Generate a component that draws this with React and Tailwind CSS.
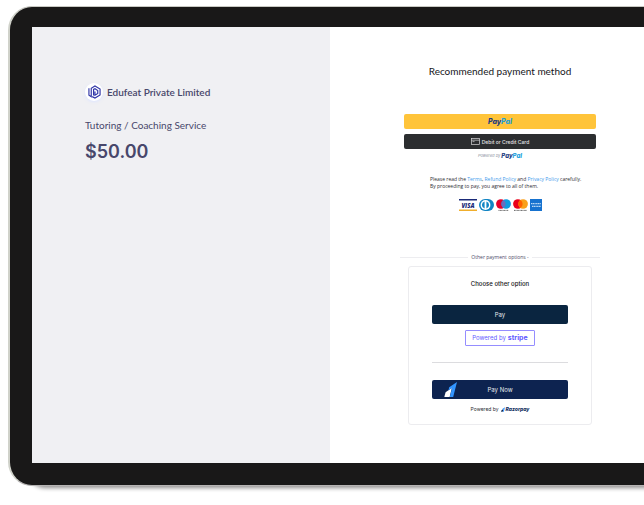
import React from "react";

function EdufeatLogo() {
  return (
    <span className="flex size-[18px] shrink-0 items-center justify-center rounded-full bg-white shadow-sm shadow-indigo-100">
      <svg viewBox="0 0 28 30" className="h-[14px] w-[13px]" fill="none" stroke="#3136a8" strokeWidth="2.500" aria-hidden="true">
        <path d="M2 7v15l5 3V7l8-5 11 6.500v13L15 28l-6-3" />
        <path d="M12 22.500V9.500l3-1.500 6 4v6l-6 4v-8" />
      </svg>
    </span>
  );
}

function PayPalMark({ className }) {
  return (
    <span className={className}>
      <span className="text-[#1b3a80]">Pay</span>
      <span className="text-[#1a9fdc]">Pal</span>
    </span>
  );
}

function CardBrands() {
  return (
    <div className="mt-[9px] flex h-3 items-center justify-center gap-[2px]">
      <svg viewBox="0 0 18 12" className="h-3 w-[18px]" role="img" aria-label="Visa">
        <rect width="18" height="12" fill="#fff" />
        <rect width="18" height="1.500" fill="#1a2a78" />
        <rect y="10.500" width="18" height="1.500" fill="#f0ae2c" />
        <text x="9" y="8.500" textAnchor="middle" fontSize="6" fontWeight="800" fontStyle="italic" fontFamily="Open Sans, sans-serif" fill="#1a2a78">VISA</text>
      </svg>
      <svg viewBox="0 0 15 12" className="h-3 w-[15px]" role="img" aria-label="Diners Club">
        <path d="M6 0h3a6 6 0 0 1 0 12H6A6 6 0 0 1 6 0z" fill="#1285c4" />
        <circle cx="6.500" cy="6" r="4.900" fill="#fff" />
        <path d="M5.600 2.600a3.500 3.500 0 0 0 0 6.800zM7.400 2.600a3.500 3.500 0 0 1 0 6.800z" fill="#1285c4" />
      </svg>
      <svg viewBox="0 0 15 12" className="h-3 w-[15px]" role="img" aria-label="Maestro">
        <circle cx="4.900" cy="5" r="4.800" fill="#e4002b" />
        <circle cx="10.100" cy="5" r="4.800" fill="#0f9be0" />
        <path d="M7.500 1a4.800 4.800 0 0 1 0 8 4.800 4.800 0 0 1 0-8z" fill="#6c6bbd" />
        <path d="M2.500 11.400h10" stroke="#555" strokeWidth="0.900" strokeDasharray="1 0.400" />
      </svg>
      <svg viewBox="0 0 15 12" className="h-3 w-[15px]" role="img" aria-label="Mastercard">
        <circle cx="4.900" cy="5" r="4.800" fill="#ea001b" />
        <circle cx="10.100" cy="5" r="4.800" fill="#f9a01b" />
        <path d="M7.500 1a4.800 4.800 0 0 1 0 8 4.800 4.800 0 0 1 0-8z" fill="#ff5f00" />
        <path d="M1 11.400h13" stroke="#555" strokeWidth="0.900" strokeDasharray="1 0.400" />
      </svg>
      <svg viewBox="0 0 12 12" className="size-3" role="img" aria-label="American Express">
        <rect width="12" height="12" fill="#1672cf" />
        <path d="M1 4.700h10M2 7.300h9" stroke="#b9d8f5" strokeWidth="1.300" strokeDasharray="1.300 0.400" />
      </svg>
    </div>
  );
}

function RazorpayGlyph({ className, back }) {
  return (
    <svg viewBox="0 0 13 15" className={className} aria-hidden="true">
      <path d="M0.300 15L1.600 10.200 8 5.800 5.600 15z" fill={back} />
      <path d="M13 0L9.200 15H5.800L8.100 6 4.400 8.400 5.200 5.300z" fill="#3395ff" />
    </svg>
  );
}

function OrderSummary() {
  return (
    <aside className="w-[298px] shrink-0 bg-[#f0f0f3] pt-14 pl-[53px] text-[#48476b]">
      <div className="flex items-center gap-1">
        <EdufeatLogo />
        <h1 className="font-['Lato','Liberation_Sans',sans-serif] text-[10px] leading-4 font-semibold">Edufeat Private Limited</h1>
      </div>
      <p className="mt-4 font-['Lato','Liberation_Sans',sans-serif] text-[10px] leading-4">Tutoring / Coaching Service</p>
      <p className="mt-[7px] text-[18px] leading-6 font-semibold">$50.00</p>
    </aside>
  );
}

function Checkout() {
  return (
    <main className="flex min-w-0 flex-1 flex-col bg-white pt-9 pr-11 pb-[38px] pl-[70px]">
      <h2 className="text-center font-['Lato','Liberation_Sans',sans-serif] text-[10px] leading-4 text-[#16161a]">Recommended payment method</h2>

      <div className="mx-1 mt-[35px] flex flex-col gap-[5px]">
        <button type="button" className="flex h-[15px] items-center justify-center rounded-[2px] bg-[#ffc43a]">
          <PayPalMark className="text-[7px] leading-3 font-extrabold italic" />
        </button>
        <button type="button" className="flex h-[15px] items-center justify-center gap-[2px] rounded-[2px] bg-[#2c2e30] text-[5px] leading-3 font-medium text-[#e4e4e6]">
          <svg viewBox="0 0 9 7" className="h-[7px] w-[9px]" fill="none" stroke="#d6d6d8" strokeWidth="0.700" aria-hidden="true">
            <rect x="0.400" y="0.400" width="8.200" height="6.200" />
            <path d="M0.400 2.200h8.200M1.500 3.600h2" />
          </svg>
          Debit or Credit Card
        </button>
      </div>
      <p className="mt-[3px] flex items-center justify-center gap-[1px] text-[4px] leading-2 text-[#8b93a0] italic">
        Powered by
        <PayPalMark className="text-[6px] font-extrabold" />
      </p>

      <p className="mt-4 mr-3 ml-[30px] font-['Open_Sans','Liberation_Sans',sans-serif] text-[5px] leading-[7px] whitespace-nowrap text-[#2c2c32]">
        Please read the <a href="#terms" className="text-[#3f9cec]">Terms</a>,{" "}
        <a href="#refund" className="text-[#3f9cec]">Refund Policy</a> and{" "}
        <a href="#privacy" className="text-[#3f9cec]">Privacy Policy</a> carefully.
        <br />
        By proceeding to pay, you agree to all of them.
      </p>
      <CardBrands />

      <button type="button" className="mt-[42px] flex items-center gap-[3px] font-['Open_Sans','Liberation_Sans',sans-serif] text-[5px] leading-2 text-[#4b4a68]">
        <span className="h-px flex-1 bg-[#ededf0]" />
        <span>Other payment options -</span>
        <span className="h-px flex-1 bg-[#ededf0]" />
      </button>

      <section className="mx-2 mt-[5px] flex flex-col rounded-[3px] border border-[#ececef] px-[23px] pt-[13px] pb-[11px]">
        <h3 className="text-center text-[6px] leading-2 font-medium text-[#111114]">Choose other option</h3>
        <button type="button" className="mt-[17px] h-[19px] rounded-[2px] bg-[#0a2540] text-[6px] leading-3 text-[#e6eaee]">Pay</button>
        <a href="#stripe" className="mt-[6px] flex h-4 w-[70px] items-center justify-center gap-[2px] self-center rounded-[1px] border border-[#958dff] text-[6px] leading-2 whitespace-nowrap text-[#635bff]">
          Powered by <b className="text-[7px] font-bold">stripe</b>
        </a>
        <hr className="mt-4 border-t border-[#dcdcdf]" />
        <button type="button" className="mt-[17px] grid h-[19px] grid-cols-[1fr_auto_1fr] items-center rounded-[2px] bg-[#0d2350] px-3 text-[6px] leading-3 text-[#e6eaee]">
          <RazorpayGlyph className="h-[15px] w-[13px]" back="#fff" />
          <span>Pay Now</span>
        </button>
        <p className="mt-[6px] flex items-center justify-center gap-[1px] text-[5px] leading-2 whitespace-nowrap text-[#2b2b33]">
          <span className="mr-px">Powered by</span>
          <RazorpayGlyph className="h-[5px] w-1" back="#0d2350" />
          <span className="font-extrabold text-[#13305f] italic">Razorpay</span>
        </p>
      </section>
    </main>
  );
}

export default function App() {
  return (
    <div className="min-h-screen overflow-hidden bg-white pt-[6px] font-['Inter','Liberation_Sans',sans-serif]">
      <div className="ml-2 rounded-l-[24px] border-t border-b border-l-2 border-t-[#c9c9c3] border-b-[#b5b3b3] border-l-[#d0d2ca] bg-[#191818] pt-5 pb-[22px] pl-[22px] shadow-[14px_6px_4px_-4px_#8f8d8d]">
        <div className="flex">
          <OrderSummary />
          <Checkout />
        </div>
      </div>
    </div>
  );
}
